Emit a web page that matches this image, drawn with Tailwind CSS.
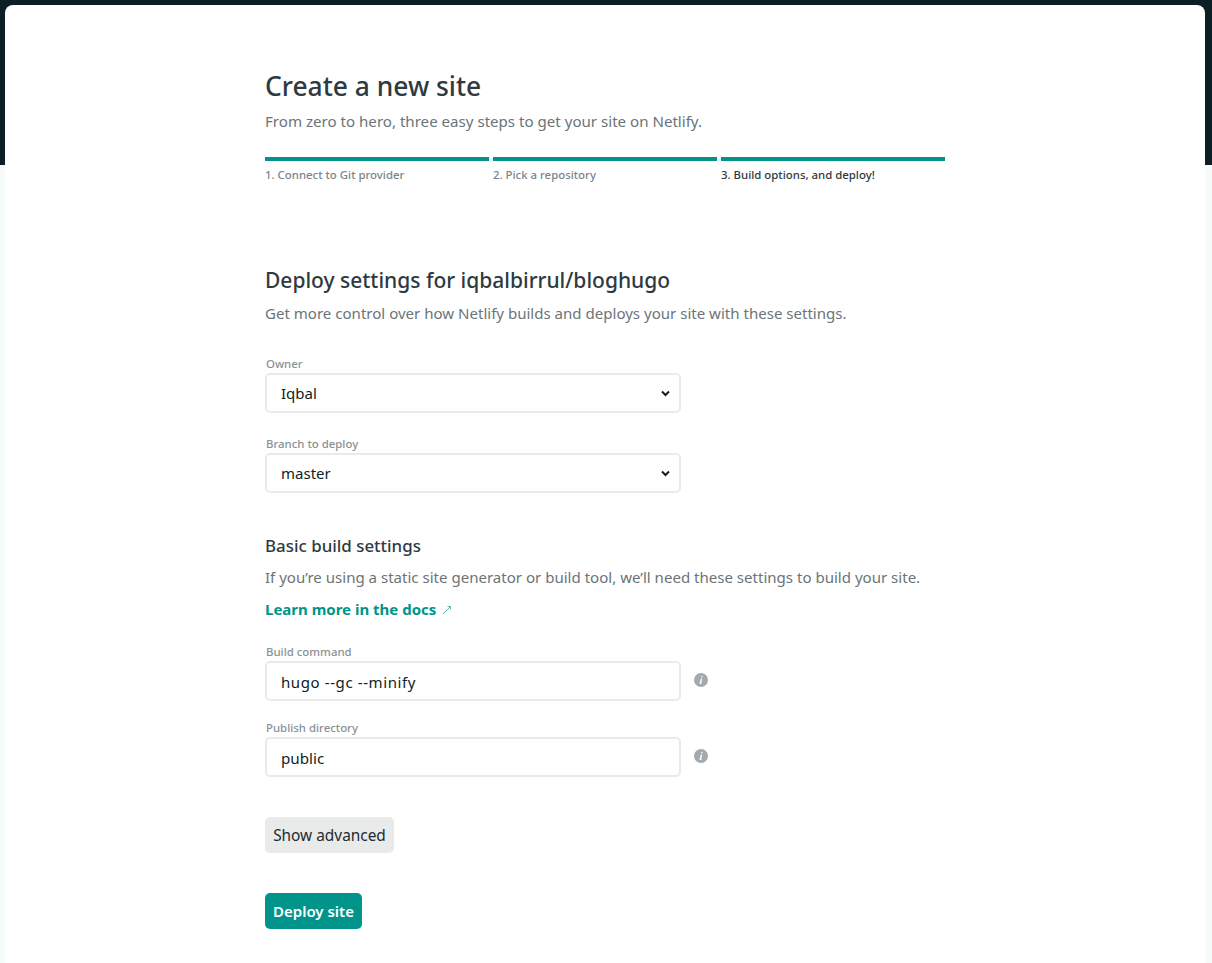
<!DOCTYPE html>
<html lang="en">
<head>
    <meta charset="UTF-8">
    <title>Create a new site</title>
    <script src="https://cdn.jsdelivr.net/npm/@tailwindcss/browser@4"></script>
</head>
<body class="h-[963px] overflow-hidden bg-[#f5fbfb] font-['Noto_Sans',sans-serif]">
    <div class="relative h-[963px]">
        <div class="absolute inset-x-0 top-0 h-[165px] bg-[#0e1e25]"></div>
        <main class="relative mr-[7px] ml-[5px] h-[958px] translate-y-[5px] rounded-t-lg bg-white pl-[260px]">
            <div class="w-[680px]">
                <h1 class="h-[100px] pt-[62px] text-[26.4px] leading-[39px] font-medium text-[#2e3a3f]">Create a new site</h1>
                <p class="h-[30px] text-[15.1px] leading-[32px] text-[#6b7478]">From zero to hero, three easy steps to get your site on Netlify.</p>
                <ol class="mt-[22px] grid grid-cols-3 gap-1 text-[11.4px] font-medium">
                    <li class="border-t-4 border-[#00948a] pt-[5px] leading-[18px] text-[#7b8488]">1. Connect to Git provider</li>
                    <li class="border-t-4 border-[#00948a] pt-[5px] leading-[18px] text-[#7b8488]">2. Pick a repository</li>
                    <li class="border-t-4 border-[#00948a] pt-[5px] leading-[18px] text-[#2e3a3f]">3. Build options, and deploy!</li>
                </ol>

                <h2 class="mt-[80px] text-[21px] leading-[32px] font-medium text-[#2e3a3f]">Deploy settings for iqbalbirrul/bloghugo</h2>
                <p class="mt-[1px] text-[15.05px] leading-[32px] text-[#6b7478]">Get more control over how Netlify builds and deploys your site with these settings.</p>

                <label class="mt-[27px] block pl-px text-[11.4px] leading-[16px] font-medium text-[#8a9195]">Owner</label>
                <div class="relative mt-px w-[416px]">
                    <select class="h-10 w-full appearance-none rounded-[5px] border-2 border-[#e9ebeb] bg-white pl-[14px] text-[15px] text-[#0e1e25]"><option>Iqbal</option></select>
                    <svg class="absolute top-[17px] right-[11px] h-[7px] w-[9px]" viewBox="0 0 9 7" fill="none" stroke="#0e1e25" stroke-width="2"><path d="M1 1.5l3.5 3.5L8 1.5"/></svg>
                </div>

                <label class="mt-[23px] block pl-px text-[11.4px] leading-[16px] font-medium text-[#8a9195]">Branch to deploy</label>
                <div class="relative mt-px w-[416px]">
                    <select class="h-10 w-full appearance-none rounded-[5px] border-2 border-[#e9ebeb] bg-white pl-[14px] text-[15px] text-[#0e1e25]"><option>master</option></select>
                    <svg class="absolute top-[17px] right-[11px] h-[7px] w-[9px]" viewBox="0 0 9 7" fill="none" stroke="#0e1e25" stroke-width="2"><path d="M1 1.5l3.5 3.5L8 1.5"/></svg>
                </div>

                <h3 class="mt-[39px] text-[16.9px] leading-[28px] font-medium text-[#2e3a3f]">Basic build settings</h3>
                <p class="mt-[1px] text-[15.05px] leading-[32px] text-[#6b7478]">If you’re using a static site generator or build tool, we’ll need these settings to build your site.</p>
                <a href="#" class="block text-[15px] leading-[32px] font-bold text-[#00948a]">Learn more in the docs <svg class="ml-[2px] inline-block h-[10px] w-[10px] align-[0px]" viewBox="0 0 10 10" fill="none" stroke="#4db3ac" stroke-width="0.9"><path d="M1 9l7.5-7.5M5.5 1.5h3V4.5"/></svg></a>

                <label class="mt-[19px] block pl-px text-[11.4px] leading-[16px] font-medium text-[#8a9195]">Build command</label>
                <div class="mt-px flex items-center gap-[13px]">
                    <input class="h-10 w-[416px] rounded-[5px] border-2 border-[#e9ebeb] bg-white pt-[2px] pl-[14px] text-[15px] tracking-[0.6px] text-[#0e1e25]" value="hugo --gc --minify">
                    <svg class="-mt-[2px] h-[14px] w-[14px]" viewBox="0 0 14 14"><circle cx="7" cy="7" r="7" fill="#a3a9ac"/><path d="M7.4 2.9h1.3l-.3 1.4H7.1zM6.9 5.6h1.3l-.9 4.3c-.1.3 0 .4.3.4l-.1.7H6.2c-.5 0-.7-.4-.6-.9z" fill="#fff"/></svg>
                </div>

                <label class="mt-[19px] block pl-px text-[11.4px] leading-[16px] font-medium text-[#8a9195]">Publish directory</label>
                <div class="mt-px flex items-center gap-[13px]">
                    <input class="h-10 w-[416px] rounded-[5px] border-2 border-[#e9ebeb] bg-white pt-[2px] pl-[14px] text-[15.2px] text-[#0e1e25]" value="public">
                    <svg class="-mt-[2px] h-[14px] w-[14px]" viewBox="0 0 14 14"><circle cx="7" cy="7" r="7" fill="#a3a9ac"/><path d="M7.4 2.9h1.3l-.3 1.4H7.1zM6.9 5.6h1.3l-.9 4.3c-.1.3 0 .4.3.4l-.1.7H6.2c-.5 0-.7-.4-.6-.9z" fill="#fff"/></svg>
                </div>

                <button class="mt-10 block h-9 w-[129px] rounded-[5px] bg-[#e9ebeb] pt-[2px] text-[15.4px] font-normal text-[#1c2a30]">Show advanced</button>
                <button class="mt-10 block h-9 w-[97px] rounded-[5px] bg-[#00948a] text-[15px] font-semibold text-white">Deploy site</button>
            </div>
        </main>
    </div>
</body>
</html>
